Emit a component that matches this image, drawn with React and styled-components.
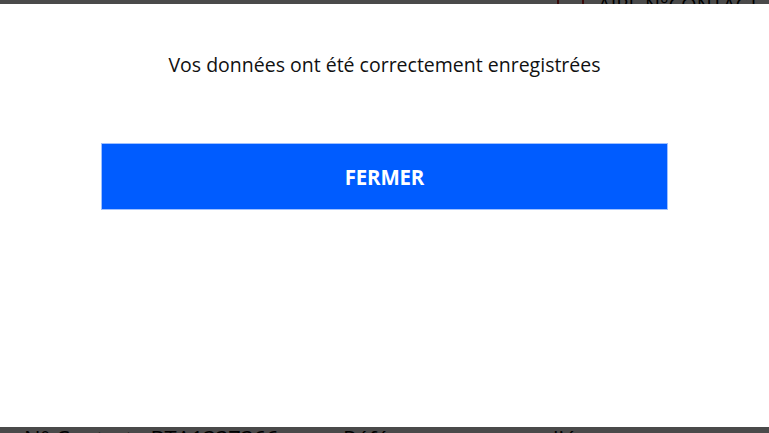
import React from "react";
import styled, { createGlobalStyle } from "styled-components";

const Global = createGlobalStyle`
  html, body { margin: 0; padding: 0; background: #fff; }
  body { font-family: "Open Sans", "DejaVu Sans", sans-serif; overflow: hidden; }
`;

const Page = styled.div`
  width: 769px;
  height: 433px;
  display: flex;
  flex-direction: column;
  justify-content: space-between;
  background: #fff;
`;

const TopBar = styled.div`
  display: flex;
  align-items: flex-end;
  height: 4px;
  overflow: hidden;
  padding-left: 557px;
`;

const RedRule = styled.span`
  width: 2px;
  height: 20px;
  background: #c62828;
  flex: none;
  margin-right: ${(p) => p.$gap}px;
`;

const TopLabel = styled.span`
  font-family: "Open Sans", sans-serif;
  font-size: 20px;
  line-height: 20px;
  color: #000;
  margin-bottom: -11px;
  white-space: nowrap;
`;

const InfoRow = styled.div`
  display: flex;
  height: 6px;
  overflow: hidden;
  padding-left: 24px;
  align-items: flex-start;
`;

const InfoItem = styled.span`
  font-family: "Open Sans", sans-serif;
  font-size: 22px;
  line-height: 22px;
  color: #000;
  white-space: nowrap;
  margin-top: 0px;
  width: ${(p) => p.$w}px;
  flex: none;
`;

const Overlay = styled.div`
  position: fixed;
  inset: 0;
  background: rgba(0, 0, 0, 0.71);
`;

const Modal = styled.div`
  position: fixed;
  top: 4px;
  left: 0;
  right: 0;
  bottom: 6px;
  background: #fff;
  display: flex;
  flex-direction: column;
  align-items: stretch;
  padding: 48px 101px 0;
  box-sizing: border-box;
`;

const Message = styled.p`
  margin: 0;
  text-align: center;
  font-family: "Open Sans", sans-serif;
  font-size: 19.5px;
  line-height: 26px;
  color: #111;
`;

const CloseButton = styled.button`
  margin-top: 65px;
  height: 67px;
  background: #005cff;
  border: 1px solid #9fc0ff;
  color: #fff;
  font-family: "Open Sans", sans-serif;
  font-weight: 700;
  font-size: 20.5px;
  letter-spacing: -0.2px;
  cursor: pointer;
`;

export default function App() {
  return (
    <>
      <Global />
      <Page>
        <TopBar>
          <RedRule $gap={23} />
          <RedRule $gap={14} />
          <TopLabel>AIRE N°CONTACT</TopLabel>
        </TopBar>
        <InfoRow>
          <InfoItem $w={319}>N° Contrat : BTA1337366</InfoItem>
          <InfoItem $w={210}>Référence</InfoItem>
          <InfoItem $w={100}>liée</InfoItem>
        </InfoRow>
      </Page>
      <Overlay />
      <Modal role="dialog">
        <Message>Vos données ont été correctement enregistrées</Message>
        <CloseButton>FERMER</CloseButton>
      </Modal>
    </>
  );
}
